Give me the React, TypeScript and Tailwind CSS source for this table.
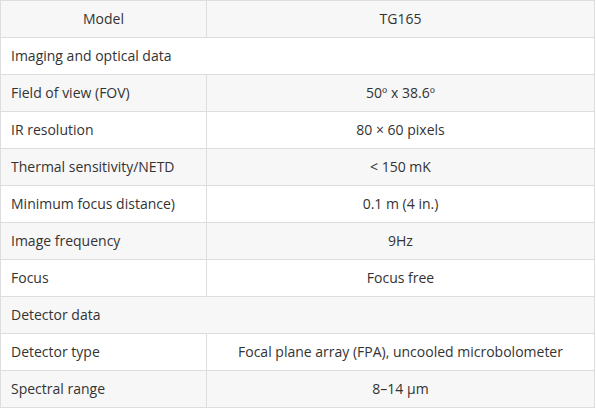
const rows: (string | [string, string])[] = [
  "Imaging and optical data",
  ["Field of view (FOV)", "50º x 38.6º"],
  ["IR resolution", "80 × 60 pixels"],
  ["Thermal sensitivity/NETD", "< 150 mK"],
  ["Minimum focus distance)", "0.1 m (4 in.)"],
  ["Image frequency", "9Hz"],
  ["Focus", "Focus free"],
  "Detector data",
  ["Detector type", "Focal plane array (FPA), uncooled microbolometer"],
  ["Spectral range", "8–14 µm"],
];

export default function App() {
  return (
    <div className="bg-white" style={{ width: 596, height: 409 }}>
      <table
        className="w-[595px] border-collapse text-[14px] leading-[20px] text-[#333]"
        style={{ fontFamily: '"Open Sans", sans-serif' }}
      >
        <thead>
          <tr className="bg-[#f7f7f7]">
            <th className="h-[37px] w-[206px] border border-[#ddd] px-[10px] text-center font-normal">
              Model
            </th>
            <th className="h-[37px] border border-[#ddd] px-[10px] text-center font-normal">
              TG165
            </th>
          </tr>
        </thead>
        <tbody>
          {rows.map((row, i) => (
            <tr key={i} className={i % 2 === 1 ? "bg-[#f7f7f7]" : "bg-white"}>
              {typeof row === "string" ? (
                <td colSpan={2} className="h-[37px] border border-[#ddd] px-[10px] text-left">
                  {row}
                </td>
              ) : (
                <>
                  <td className="h-[37px] border border-[#ddd] px-[10px] text-left">{row[0]}</td>
                  <td className="h-[37px] border border-[#ddd] px-[10px] text-center">{row[1]}</td>
                </>
              )}
            </tr>
          ))}
        </tbody>
      </table>
    </div>
  );
}
